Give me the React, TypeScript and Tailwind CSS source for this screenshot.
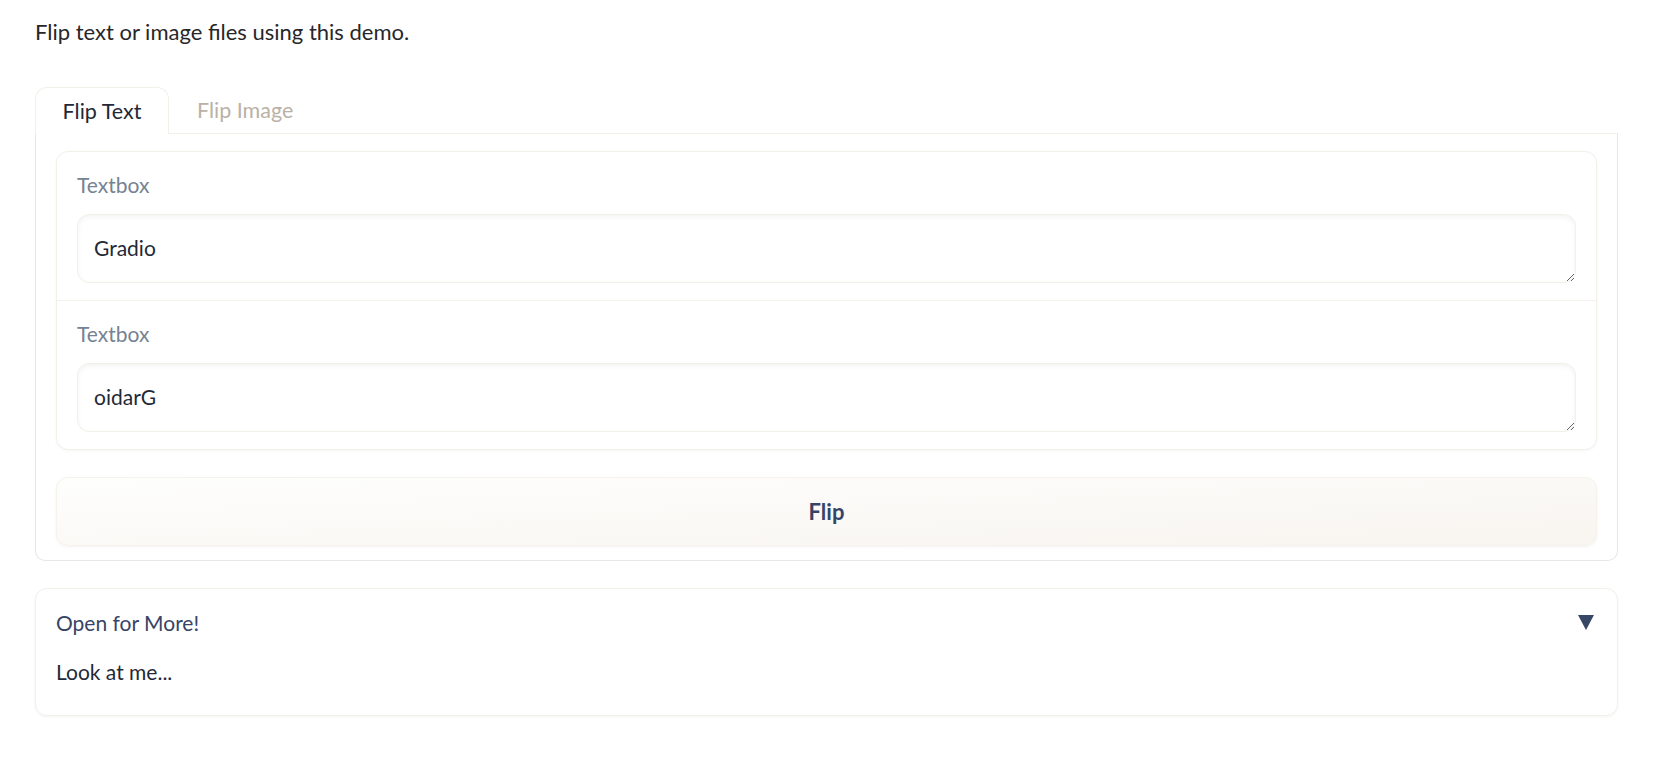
import React from "react";

function TextBlock({ value, last }: { value: string; last?: boolean }) {
  return (
    <div
      className={
        "flex flex-col px-[20px] pt-[18px] pb-[17px] " +
        (last ? "" : "border-b border-[#f5f2ec]")
      }
    >
      <span className="text-[21px] leading-[30px] text-[#758393]">Textbox</span>
      <textarea
        className="mt-[14px] block h-[69px] w-full resize-y rounded-[12px] border border-[#f3f0ea] bg-white px-[16px] py-[18px] text-[21px] leading-[30px] text-[#1f2937] shadow-[inset_0_2px_5px_rgba(0,0,0,0.05)] outline-none"
        rows={1}
        defaultValue={value}
      />
    </div>
  );
}

export default function App() {
  return (
    <div className="min-h-screen bg-white pl-[35px] pr-[40px] font-['Lato',sans-serif]">
      <p className="pt-[18px] text-[22px] leading-[28px] text-[#27272a]">
        Flip text or image files using this demo.
      </p>

      <div className="mt-[41px]">
        <div className="flex h-[47px] border-b border-[#f3efe9]">
          <button className="-mb-px h-[47px] w-[134px] rounded-t-[12px] border border-b-0 border-[#f3efe9] bg-white text-[21.5px] text-[#1f2937]">
            Flip Text
          </button>
          <button className="h-[46px] px-[28px] text-[21.5px] text-[#bab1a6]">Flip Image</button>
        </div>

        <div className="flex flex-col gap-[27px] rounded-b-[10px] border border-t-0 border-[#e5e7eb] px-[20px] pt-[17px] pb-[14px]">
          <div className="flex flex-col rounded-[12px] border border-[#f3f0ea] bg-white shadow-[0_1px_3px_rgba(0,0,0,0.04)]">
            <TextBlock value="Gradio" />
            <TextBlock value="oidarG" last />
          </div>

          <button className="h-[69px] w-full rounded-[12px] border border-[#f6f2ec] bg-gradient-to-br from-[#fefefd] to-[#f8f5f0] text-[22px] font-bold text-[#374466] shadow-[0_1px_3px_rgba(0,0,0,0.05)]">
            Flip
          </button>
        </div>
      </div>

      <div className="mt-[27px] rounded-[12px] border border-[#f3efe9] px-[20px] pt-[19px] pb-[28px] shadow-[0_1px_3px_rgba(0,0,0,0.05)]">
        <div className="flex items-center justify-between">
          <span className="text-[21px] leading-[30px] text-[#374466]">Open for More!</span>
          <svg width="16" height="15" viewBox="0 0 16 15" className="mr-[3px] -mt-[2px]">
            <polygon points="0,0 16,0 8,15" fill="#394766" />
          </svg>
        </div>
        <p className="mt-[19px] text-[21px] leading-[30px] text-[#1f2937]">Look at me...</p>
      </div>
    </div>
  );
}
